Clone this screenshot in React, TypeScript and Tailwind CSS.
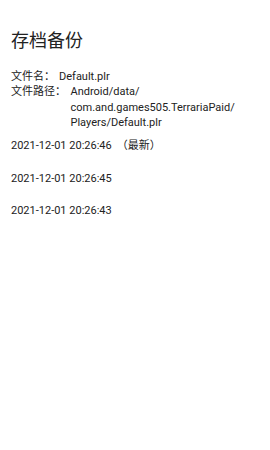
import React from "react";

const font = { fontFamily: 'Roboto, "Noto Sans CJK SC", sans-serif' };

export default function App() {
  const rows = [
    { t: "2021-12-01 20:26:46", latest: true },
    { t: "2021-12-01 20:26:45", latest: false },
    { t: "2021-12-01 20:26:43", latest: false },
  ];
  return (
    <div
      className="w-[270px] h-[450px] bg-white text-[#222222] px-[11px] pt-[28px] font-['Roboto','Noto_Sans_CJK_SC',sans-serif]"
      style={font}
    >
      <div className="text-[18px] leading-[26px]">存档备份</div>
      <div className="mt-[15px] text-[11px] leading-[15.3px]">
        <div className="flex">
          <span className="w-[48px] shrink-0">文件名：</span>
          <span>Default.plr</span>
        </div>
        <div className="flex">
          <span className="w-[59.5px] shrink-0">文件路径：</span>
          <span>
            Android/data/
            <br />
            com.and.games505.TerrariaPaid/
            <br />
            Players/Default.plr
          </span>
        </div>
      </div>
      <div className="text-[11px]">
        {rows.map((r) => (
          <div key={r.t} className="h-[32.5px] flex items-center">
            <span>{r.t}</span>
            {r.latest && <span className="ml-[5px]">（最新）</span>}
          </div>
        ))}
      </div>
    </div>
  );
}
